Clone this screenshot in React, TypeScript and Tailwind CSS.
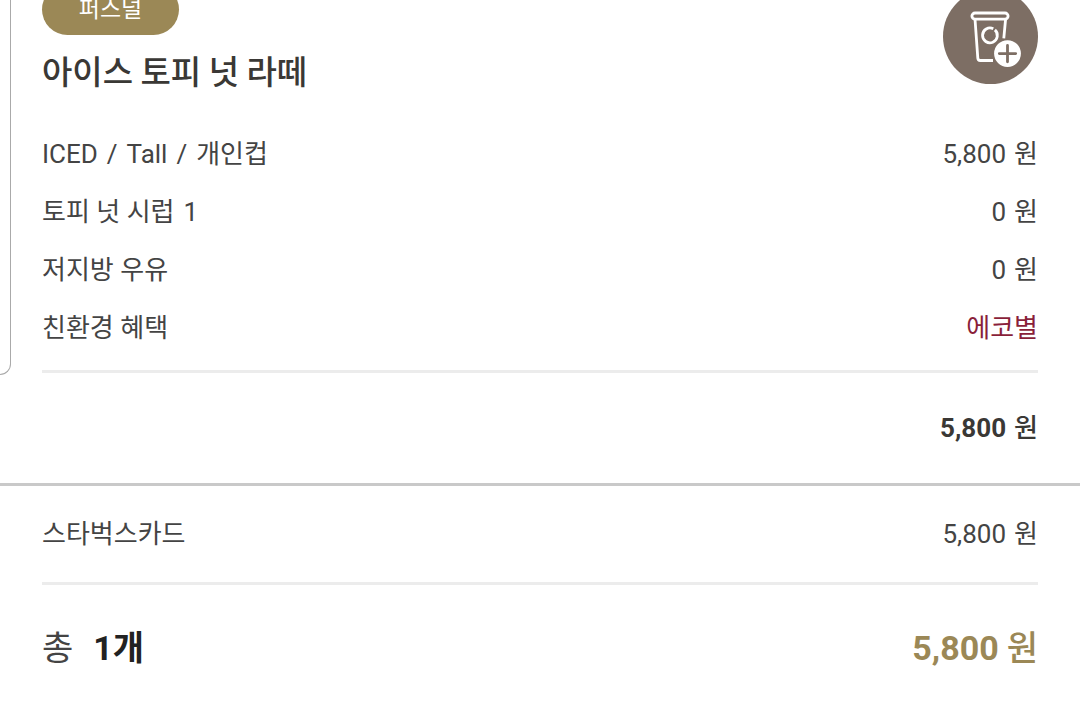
const items = [
  { name: ["ICED", "/", "Tall", "/", "개인컵"], price: "5,800" },
  { name: ["토피 넛 시럽", "1"], price: "0" },
  { name: ["저지방 우유"], price: "0" },
  { name: ["친환경 혜택"], benefit: "에코별" },
];

function Price({ amount, strong }: { amount: string; strong?: boolean }) {
  return (
    <span className={strong ? "flex gap-2 font-bold" : "flex gap-2"}>
      {amount}
      <span className={strong ? "font-medium" : ""}>원</span>
    </span>
  );
}

function PersonalCupIcon() {
  return (
    <svg
      viewBox="0 0 95 95"
      className="-mt-[11px] size-[95px] shrink-0"
      fill="none"
      stroke="#fff"
      strokeWidth="2.8"
      strokeLinecap="round"
      strokeLinejoin="round"
      role="img"
      aria-label="개인컵"
    >
      <circle cx="47.5" cy="47.5" r="47.5" fill="#7d6e64" stroke="none" />
      <path d="M32 30.2a3.1 3.1 0 0 1 0-6.2h30a3.1 3.1 0 0 1 0 6.2Z" />
      <path d="M32 30l2.8 39.2q.2 2.3 2.4 2.3H50M62.6 30l-1.8 19.3" strokeLinecap="butt" />
      <path d="M51.9 40.9a7.4 7.4 0 1 1-1.6-1.1" strokeLinecap="butt" />
      <circle cx="64.5" cy="64.6" r="13.4" fill="#fff" stroke="none" />
      <path d="M64.5 56.4v16.4M56.3 64.6h16.4" stroke="#7d6e64" />
    </svg>
  );
}

export default function App() {
  return (
    <main className="relative overflow-hidden bg-white font-['Roboto','Noto_Sans_CJK_KR',sans-serif] text-[26px] leading-[58px] text-[#444]">
      {/* edge of the neighbouring card */}
      <div className="absolute top-0 left-0 h-[375px] w-[11px] rounded-br-xl border-r border-b border-[#aaa]" />

      <section className="px-[42px]">
        <div className="flex items-start justify-between">
          <div>
            <div className="-mt-4 flex h-[51px] w-[137px] items-center justify-center rounded-full bg-[#9b8856] text-[23px] text-white">
              퍼스널
            </div>
            <h1 className="mt-[11px] font-['Noto_Sans_CJK_KR',sans-serif] text-[33px] leading-[48px] font-medium text-[#3a3835]">
              아이스 토피 넛 라떼
            </h1>
          </div>
          <PersonalCupIcon />
        </div>

        <ul className="mt-[31px] border-b-3 border-[#ececec] pb-[13px]">
          {items.map((item) => (
            <li key={item.name.join(" ")} className="flex justify-between">
              <span className="flex gap-[9px]">
                {item.name.map((part, i) => (
                  <span key={i}>{part}</span>
                ))}
              </span>
              {item.price ? (
                <Price amount={item.price} />
              ) : (
                <span className="text-[#8a1f3a]">{item.benefit}</span>
              )}
            </li>
          ))}
        </ul>

        <div className="flex justify-end py-[26px] text-[#3a3835]">
          <Price amount="5,800" strong />
        </div>
      </section>

      <section className="border-t-3 border-[#c9c9c9] px-[42px]">
        <div className="flex justify-between border-b-3 border-[#ececec] py-[19px]">
          <span>스타벅스카드</span>
          <Price amount="5,800" />
        </div>
        <div className="flex justify-between py-[34px] text-[34px]">
          <p className="flex gap-5">
            <span>총</span>
            <strong className="text-[#222]">1개</strong>
          </p>
          <div className="text-[#9b8856]">
            <Price amount="5,800" strong />
          </div>
        </div>
      </section>
    </main>
  );
}
